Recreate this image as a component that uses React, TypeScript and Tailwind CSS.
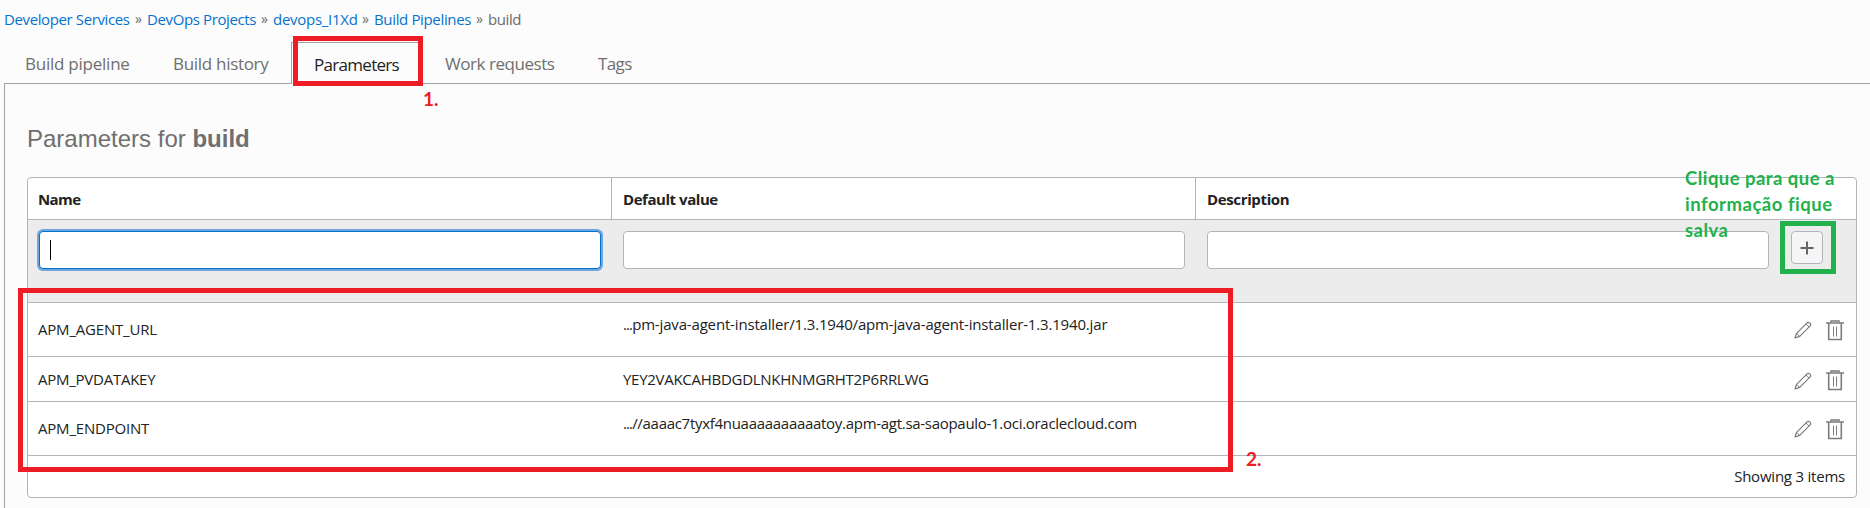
import type { ReactNode } from "react";

const crumbs = [
  { label: "Developer Services", cls: "w-[131px] tracking-[-0.38px]" },
  { label: "DevOps Projects", cls: "w-[114px] tracking-[-0.38px]" },
  { label: "devops_I1Xd", cls: "w-[89px] tracking-[-0.28px]" },
  { label: "Build Pipelines", cls: "w-[102px] tracking-[-0.35px]" },
];

const columns = [
  { label: "Name", cls: "w-[584px] pl-[10px] tracking-[-0.6px] border-r" },
  { label: "Default value", cls: "w-[584px] pl-[11px] tracking-[-0.45px] border-r" },
  { label: "Description", cls: "flex-1 pl-[11px] tracking-[-0.36px]" },
];

type Row = {
  name: string;
  nameCls: string;
  prefix?: string;
  value: string;
  valueCls: string;
  rowCls: string;
  iconsCls: string;
};

const rows: Row[] = [
  {
    name: "APM_AGENT_URL",
    nameCls: "tracking-[-0.2px] -mt-[2px]",
    prefix: "...",
    value: "pm-java-agent-installer/1.3.1940/apm-java-agent-installer-1.3.1940.jar",
    valueCls: "tracking-[-0.165px] -mt-[12px]",
    rowCls: "h-[54px]",
    iconsCls: "mt-px",
  },
  {
    name: "APM_PVDATAKEY",
    nameCls: "tracking-[-0.25px]",
    value: "YEY2VAKCAHBDGDLNKHNMGRHT2P6RRLWG",
    valueCls: "tracking-[-0.28px]",
    rowCls: "h-[45px]",
    iconsCls: "mt-[3px]",
  },
  {
    name: "APM_ENDPOINT",
    nameCls: "tracking-[-0.2px] -mt-[2px]",
    prefix: "...",
    value: "//aaaac7tyxf4nuaaaaaaaaaatoy.apm-agt.sa-saopaulo-1.oci.oraclecloud.com",
    valueCls: "tracking-[-0.29px] -mt-[12px]",
    rowCls: "h-[54px]",
    iconsCls: "mt-px",
  },
];

function PencilIcon() {
  return (
    <svg width="18" height="18" viewBox="0 0 18 18" fill="none" stroke="#7b7b7b" strokeWidth="1.2" strokeLinejoin="round">
      <path d="M1 17l1.6-4.7L13.1 1.8c.7-.7 1.8-.7 2.5 0l.6.6c.7.7.7 1.8 0 2.5L5.7 15.4z" />
      <path d="M2.6 12.3l3.1 3.1M12 2.9l3.1 3.1" strokeWidth="1" />
    </svg>
  );
}

function TrashIcon() {
  return (
    <svg width="18" height="21" viewBox="0 0 18 21" fill="none" stroke="#7b7b7b">
      <path d="M5 2.5V1h8v1.5" strokeWidth="1.4" />
      <path d="M0 2.9h18" strokeWidth="1.5" />
      <path d="M2.7 3v16.5h12.6V3" strokeWidth="1.6" />
      <path d="M7.5 6.5v10M10.5 6.5v10" strokeWidth="1" />
    </svg>
  );
}

function Tab({ children, cls }: { children: ReactNode; cls: string }) {
  return <div className={`shrink-0 pt-[10px] h-[41px] text-[17px] leading-6 whitespace-nowrap ${cls}`}>{children}</div>;
}

export default function App() {
  return (
    <div className="relative h-[508px] w-[1870px] overflow-hidden bg-[#fcfcfc] font-['Open_Sans','Noto_Sans',sans-serif] text-[15px] leading-5 text-[#222]">
      <nav className="flex h-[42px] pt-[9px] pl-[4px] whitespace-nowrap text-[#6b6b6b]">
        {crumbs.map((c) => (
          <div key={c.label} className="flex">
            <a className={`shrink-0 text-[#0572ce] ${c.cls}`}>{c.label}</a>
            <span className="w-[12px] text-[14px]">»</span>
          </div>
        ))}
        <span className="tracking-[-0.4px]">build</span>
      </nav>

      <div className="flex h-[42px] pl-[4px] text-[#6f6f6f]">
        <Tab cls="w-[148px] pl-[21px] tracking-[-0.24px]">Build pipeline</Tab>
        <Tab cls="w-[139px] pl-[21px] tracking-[-0.3px]">Build history</Tab>
        <Tab cls="z-10 w-[131px] !h-[42px] border-t border-x border-[#a3a3a3] bg-[#fcfcfc] pl-[22px] text-[#1f1f1f] tracking-[-0.7px]">Parameters</Tab>
        <Tab cls="w-[154px] pl-[23px] tracking-[-0.45px]">Work requests</Tab>
        <Tab cls="pl-[22px] tracking-[-0.6px]">Tags</Tab>
      </div>

      <main className="-mt-px ml-[4px] h-[430px] border-t border-l border-[#a3a3a3] pl-[22px]">
        <h1 className="h-[93px] pt-[41px] font-['Liberation_Sans',Arial,sans-serif] text-[24px] leading-7 text-[#6f6f6f]">
          Parameters for <b>build</b>
        </h1>

        <section className="h-[321px] w-[1830px] overflow-hidden rounded-[4px] border border-[#b0b5be] bg-white">
          <div className="flex h-[42px] border-b border-[#b0b5be] font-bold">
            {columns.map((c) => (
              <div key={c.label} className={`border-[#b0b5be] pt-[11px] ${c.cls}`}>{c.label}</div>
            ))}
          </div>

          <div className="flex h-[83px] border-b border-[#b0b5be] bg-[#ececec] pt-[11px] pl-[11px]">
            <div className="flex h-[38px] w-[562px] items-center rounded-[4px] border border-[#0572ce] bg-white pl-[10px] shadow-[0_0_0_2px_#70a5e0]">
              <div className="h-5 w-px bg-black" />
            </div>
            <div className="ml-[22px] h-[38px] w-[562px] rounded-[4px] border border-[#b0b5be] bg-white" />
            <div className="ml-[22px] h-[38px] w-[562px] rounded-[4px] border border-[#b0b5be] bg-white" />
            <button className="ml-[22px] flex h-[33px] w-[32px] items-center justify-center rounded-[4px] border border-[#b0b5be] bg-[#f5f5f5]">
              <svg width="14" height="14" viewBox="0 0 14 14" stroke="#666" strokeWidth="2">
                <path d="M0.5 7h13M7 0.5v13" />
              </svg>
            </button>
          </div>

          {rows.map((r) => (
            <div key={r.name} className={`flex items-center border-b border-[#b0b5be] whitespace-nowrap ${r.rowCls}`}>
              <div className={`w-[584px] pl-[10px] ${r.nameCls}`}>{r.name}</div>
              <div className={`w-[1000px] pl-[11px] ${r.valueCls}`}>
                {r.prefix && <span className="tracking-[-0.9px]">{r.prefix}</span>}
                {r.value}
              </div>
              <div className={`ml-auto flex items-center gap-[14px] pr-[12px] ${r.iconsCls}`}>
                <PencilIcon />
                <TrashIcon />
              </div>
            </div>
          ))}

          <div className="pt-[10px] pr-[11px] text-right tracking-[-0.22px]">Showing 3 items</div>
        </section>
      </main>

      <div className="absolute top-[36px] left-[293px] z-20 h-[50px] w-[130px] border-[5px] border-[#ee1c24]" />
      <div className="absolute top-[288px] left-[18px] z-20 h-[184px] w-[1215px] border-[5px] border-[#ee1c24]" />
      <div className="absolute top-[221px] left-[1780px] z-20 h-[53px] w-[56px] border-[5px] border-[#22b14c]" />
      <div className="absolute top-[86px] left-[423px] z-20 font-['Lato',sans-serif] text-[19px] leading-[26px] font-bold text-[#ee1c24]">1.</div>
      <div className="absolute top-[446px] left-[1246px] z-20 font-['Lato',sans-serif] text-[19px] leading-[26px] font-bold text-[#ee1c24]">2.</div>
      <div className="absolute top-[165px] left-[1685px] z-20 font-['Lato',sans-serif] text-[18.5px] leading-[26px] font-bold tracking-[0.45px] whitespace-nowrap text-[#22b14c]">
        <div>Clique para que a</div>
        <div className="tracking-[0.52px]">informação fique</div>
        <div>salva</div>
      </div>
    </div>
  );
}
